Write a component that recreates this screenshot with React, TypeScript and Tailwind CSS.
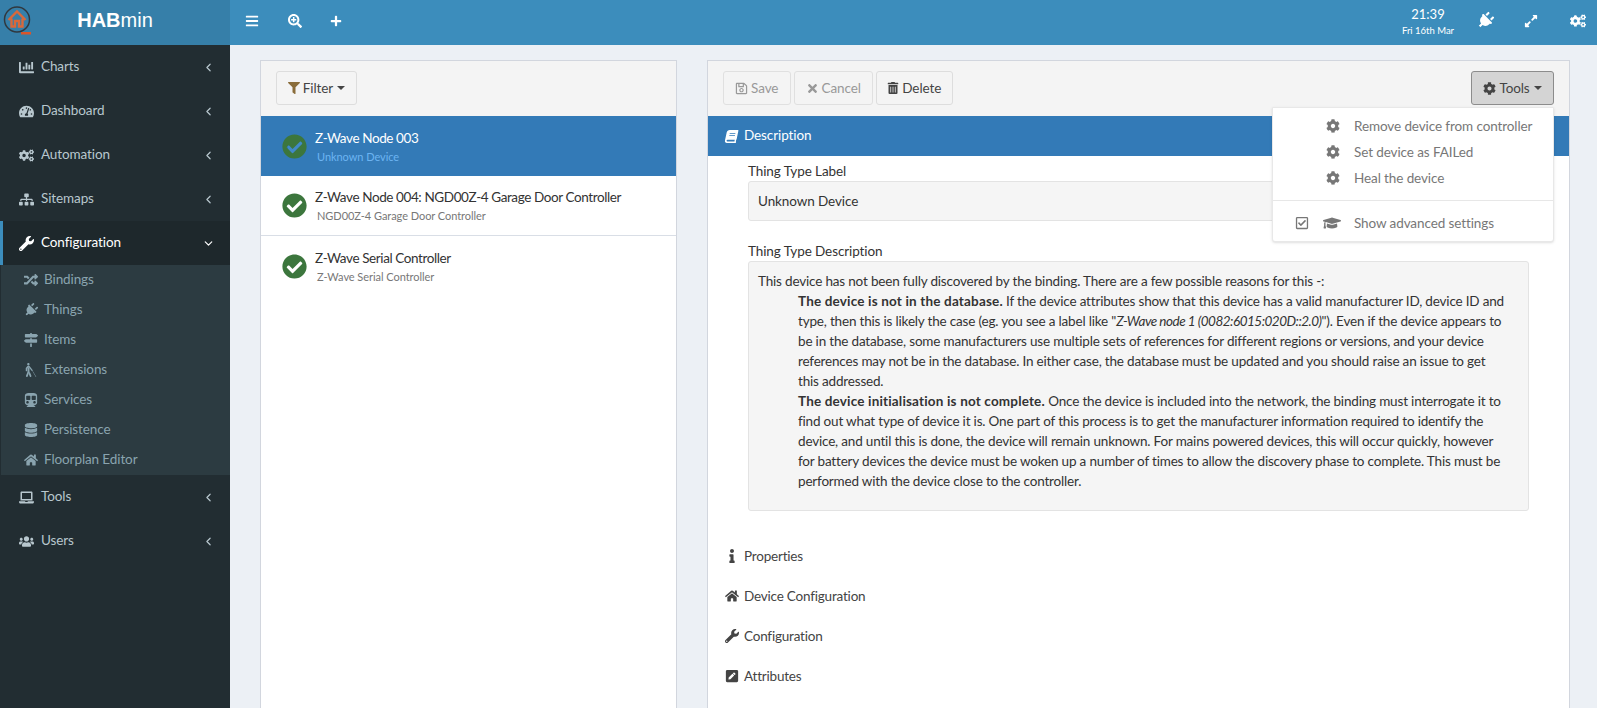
import { ReactNode } from "react";
import { ChevronDown, ChevronLeft } from "lucide-react";
import {
  FaBars,
  FaBlind,
  FaBook,
  FaChartBar,
  FaCheckCircle,
  FaCog,
  FaCogs,
  FaDatabase,
  FaExpandAlt,
  FaFilter,
  FaGraduationCap,
  FaHome,
  FaInfo,
  FaLaptop,
  FaMapSigns,
  FaPenSquare,
  FaPlug,
  FaPlus,
  FaRandom,
  FaRegCheckSquare,
  FaRegSave,
  FaSearchPlus,
  FaSitemap,
  FaSubway,
  FaTachometerAlt,
  FaTimes,
  FaTrashAlt,
  FaUsers,
  FaWrench,
} from "react-icons/fa";

function Caret() {
  return <span className="ml-[4px] h-0 w-0 border-x-[4px] border-t-[4px] border-x-transparent border-t-current" />;
}

function NavItem({ icon, label, active }: { icon: ReactNode; label: string; active?: boolean }) {
  return (
    <div
      className={
        active
          ? "flex h-[44px] items-center border-l-[3px] border-[#3c8dbc] bg-[#1e282c] pl-[13px] pr-[15px] text-white"
          : "flex h-[44px] items-center border-l-[3px] border-transparent pl-[13px] pr-[15px] text-[#b8c7ce]"
      }
    >
      <span className="mr-[5px] flex w-[20px] shrink-0 justify-center text-[15px]">{icon}</span>
      <span className="flex-1 pb-[1px] text-[13.5px]">{label}</span>
      {active ? <ChevronDown size={13} strokeWidth={2.2} /> : <ChevronLeft size={13} strokeWidth={2.2} />}
    </div>
  );
}

function SubItem({ icon, label }: { icon: ReactNode; label: string }) {
  return (
    <div className="flex h-[30px] items-center pl-[21px] text-[#8aa4af]">
      <span className="mr-[4px] flex w-[18px] shrink-0 justify-center text-[14px]">{icon}</span>
      <span className="pb-[1px] text-[13.5px]">{label}</span>
    </div>
  );
}

function ThingRow({ title, sub, selected, last }: { title: string; sub: string; selected?: boolean; last?: boolean }) {
  return (
    <div
      className={
        selected
          ? "flex h-[60px] items-center bg-[#337ab7] pl-[21px]"
          : last
            ? "flex h-[60px] items-center bg-white pl-[21px]"
            : "flex h-[60px] items-center border-b border-[#d9dee6] bg-white pl-[21px]"
      }
    >
      <span className="relative flex h-[25px] w-[25px] items-center justify-center">
        <span className={selected ? "absolute h-[14px] w-[14px] bg-[#4189c7]" : "absolute h-[14px] w-[14px] bg-white"} />
        <FaCheckCircle className="relative text-[25px] text-[#3c763d]" />
      </span>
      <div className="ml-[8px] flex flex-col pt-[1px]">
        <span className={selected ? "text-[13.5px] leading-[20px] tracking-[-0.4px] text-white" : "text-[13.5px] leading-[20px] tracking-[-0.4px] text-[#333]"}>
          {title}
        </span>
        <span
          className={
            selected
              ? "ml-[2px] text-[11px] leading-[18px] tracking-[-0.05px] text-[#6cb4f2]"
              : "ml-[2px] text-[11px] leading-[18px] tracking-[-0.05px] text-[#777]"
          }
        >
          {sub}
        </span>
      </div>
    </div>
  );
}

function ToolButton({ icon, label, w, dim }: { icon: ReactNode; label: string; w: string; dim?: boolean }) {
  return (
    <button
      className={
        dim
          ? `flex h-[34px] items-center justify-center gap-[3px] rounded-[3px] border border-[#e0e0e0] bg-[#f4f4f4] text-[13.5px] text-[#999] ${w}`
          : `flex h-[34px] items-center justify-center gap-[3px] rounded-[3px] border border-[#ddd] bg-[#f4f4f4] text-[13.5px] text-[#444] ${w}`
      }
    >
      {icon}
      {label}
    </button>
  );
}

function Section({ icon, label }: { icon: ReactNode; label: string }) {
  return (
    <div className="flex h-[40px] items-center pl-[14px] text-[13.5px] tracking-[-0.2px] text-[#444]">
      <span className="mr-[2px] flex w-[20px] justify-center text-[14px]">{icon}</span>
      {label}
    </div>
  );
}

function MenuRow({ label }: { label: string }) {
  return (
    <div className="flex h-[26px] items-center text-[13.5px] text-[#777]">
      <FaCog className="ml-[53px] w-[14px] text-[14px]" />
      <span className="ml-[14px]">{label}</span>
    </div>
  );
}

export default function App() {
  return (
    <div className="flex h-screen w-full flex-col overflow-hidden bg-[#ecf0f5] font-['Lato','Noto_Sans',sans-serif] tracking-[-0.1px]">
      {/* Header */}
      <header className="flex h-[45px] shrink-0 bg-[#3c8dbc] text-white">
        <div className="relative flex w-[230px] shrink-0 items-center justify-center bg-[#367fa9] pb-[5px]">
          <svg className="absolute left-[3px] top-[5px]" width="30" height="30" viewBox="0 0 30 30">
            <circle cx="14" cy="14.5" r="12.5" fill="none" stroke="#30383f" strokeWidth="1.5" />
            <path d="M5.5 15 14 6.5l8.5 8.5M8.5 13.5v8h3.5v-5.5h4v5.5h3.5v-8" fill="none" stroke="#d9683a" strokeWidth="2.4" />
            <rect x="18" y="27" width="10" height="2.5" fill="#d9552b" />
          </svg>
          <span className="font-['Liberation_Sans'] text-[20px] leading-none tracking-normal">
            <b>HAB</b>min
          </span>
        </div>
        <div className="flex flex-1 items-center pb-[4px]">
          <FaBars className="ml-[15px] text-[14px]" />
          <FaSearchPlus className="ml-[29px] text-[14px]" />
          <FaPlus className="ml-[28px] text-[12px]" />
        </div>
        <div className="flex items-start">
          <div className="mr-[4px] flex w-[60px] flex-col items-center pt-[4px]">
            <span className="text-[13px] leading-[20px] tracking-normal">21:39</span>
            <span className="text-[9.5px] leading-[14px] tracking-normal">Fri 16th Mar</span>
          </div>
          <span className="flex h-[41px] w-[46px] items-center justify-center">
            <FaPlug className="rotate-45 text-[17px]" />
          </span>
          <span className="flex h-[41px] w-[46px] items-center justify-center">
            <FaExpandAlt className="text-[14px]" />
          </span>
          <span className="flex h-[41px] w-[43px] items-center justify-center pl-[5px]">
            <FaCogs className="text-[16px]" />
          </span>
        </div>
      </header>

      <div className="flex min-h-0 flex-1">
        {/* Sidebar */}
        <aside className="w-[230px] shrink-0 bg-[#222d32]">
          <NavItem icon={<FaChartBar />} label="Charts" />
          <NavItem icon={<FaTachometerAlt />} label="Dashboard" />
          <NavItem icon={<FaCogs />} label="Automation" />
          <NavItem icon={<FaSitemap />} label="Sitemaps" />
          <NavItem icon={<FaWrench />} label="Configuration" active />
          <div className="ml-[1px] bg-[#2c3b41]">
            <SubItem icon={<FaRandom />} label="Bindings" />
            <SubItem icon={<FaPlug className="rotate-45" />} label="Things" />
            <SubItem icon={<FaMapSigns />} label="Items" />
            <SubItem icon={<FaBlind />} label="Extensions" />
            <SubItem icon={<FaSubway />} label="Services" />
            <SubItem icon={<FaDatabase />} label="Persistence" />
            <SubItem icon={<FaHome />} label="Floorplan Editor" />
          </div>
          <NavItem icon={<FaLaptop />} label="Tools" />
          <NavItem icon={<FaUsers />} label="Users" />
        </aside>

        {/* Content */}
        <main className="flex min-w-0 flex-1 gap-[30px] pl-[30px] pr-[27px] pt-[15px]">
          {/* Thing list */}
          <section className="w-[417px] shrink-0 border border-b-0 border-[#d2d6de] bg-white">
            <div className="flex h-[55px] items-start bg-[#f4f4f4] pl-[15px] pt-[10px]">
              <button className="flex h-[34px] w-[81px] items-center justify-center rounded-[3px] border border-[#ddd] bg-[#f4f4f4] text-[13.5px] text-[#444]">
                <FaFilter className="mr-[3px] text-[12px] text-[#8a6d3b]" />
                Filter
                <Caret />
              </button>
            </div>
            <ThingRow title="Z-Wave Node 003" sub="Unknown Device" selected />
            <ThingRow title="Z-Wave Node 004: NGD00Z-4 Garage Door Controller" sub="NGD00Z-4 Garage Door Controller" />
            <ThingRow title="Z-Wave Serial Controller" sub="Z-Wave Serial Controller" last />
          </section>

          {/* Thing detail */}
          <section className="relative min-w-0 flex-1 border border-b-0 border-[#d2d6de] bg-white">
            <div className="flex h-[55px] items-start gap-[3.5px] bg-[#f4f4f4] pl-[15px] pr-[15px] pt-[10px]">
              <ToolButton dim w="w-[67.5px]" icon={<FaRegSave className="text-[13px]" />} label="Save" />
              <ToolButton dim w="w-[78.5px]" icon={<FaTimes className="text-[13px]" />} label="Cancel" />
              <ToolButton w="w-[76.5px]" icon={<FaTrashAlt className="text-[12px]" />} label="Delete" />
              <button className="ml-auto flex h-[34px] w-[83px] items-center justify-center rounded-[3px] border border-[#8c8c8c] bg-[#d4d4d4] text-[13.5px] text-[#444]">
                <FaCog className="mr-[3px] text-[13px]" />
                Tools
                <Caret />
              </button>
            </div>

            <div className="flex h-[40px] items-center bg-[#337ab7] pl-[17px] text-[13.5px] text-white">
              <FaBook className="mr-[6px] -skew-x-12 text-[13px]" />
              <span className="pb-[1px]">Description</span>
            </div>

            <div className="pl-[40px] pr-[40px] pt-[5px] text-[13.5px] text-[#333]">
              <div className="leading-[20px]">Thing Type Label</div>
              <div className="flex h-[40px] items-center rounded-[3px] border border-[#e3e3e3] bg-[#f5f5f5] pl-[9px]">Unknown Device</div>
              <div className="mt-[20px] leading-[20px]">Thing Type Description</div>
              <div className="h-[250px] whitespace-nowrap rounded-[3px] border border-[#e3e3e3] bg-[#f5f5f5] px-[9px] pt-[9px] leading-[20px] tracking-[-0.18px]">
                This device has not been fully discovered by the binding. There are a few possible reasons for this -:
                <div className="pl-[40px]">
                  <b className="tracking-[0.17px]">The device is not in the database.</b> If the device attributes show that this device has a valid manufacturer ID, device ID and
                  <br />
                  type, then this is likely the case (eg. you see a label like "<i className="tracking-[-0.5px]">Z-Wave node 1 (0082:6015:020D::2.0)</i>"). Even if the device appears to
                  <br />
                  be in the database, some manufacturers use multiple sets of references for different regions or versions, and your device
                  <br />
                  references may not be in the database. In either case, the database must be updated and you should raise an issue to get
                  <br />
                  this addressed.
                  <br />
                  <b className="tracking-[0.17px]">The device initialisation is not complete.</b> Once the device is included into the network, the binding must interrogate it to
                  <br />
                  find out what type of device it is. One part of this process is to get the manufacturer information required to identify the
                  <br />
                  device, and until this is done, the device will remain unknown. For mains powered devices, this will occur quickly, however
                  <br />
                  for battery devices the device must be woken up a number of times to allow the discovery phase to complete. This must be
                  <br />
                  performed with the device close to the controller.
                </div>
              </div>
            </div>

            <div className="mt-[25px]">
              <Section icon={<FaInfo />} label="Properties" />
              <Section icon={<FaHome />} label="Device Configuration" />
              <Section icon={<FaWrench />} label="Configuration" />
              <Section icon={<FaPenSquare />} label="Attributes" />
            </div>

            {/* Tools menu */}
            <div className="absolute left-[564px] top-[46px] w-[282px] rounded-b-[3px] border border-[#e8e8e8] bg-white pt-[5px] shadow-sm">
              <MenuRow label="Remove device from controller" />
              <MenuRow label="Set device as FAILed" />
              <MenuRow label="Heal the device" />
              <div className="mt-[9px] border-t border-[#e7e7e7]" />
              <div className="flex h-[40px] items-center pt-[4px] text-[13.5px] text-[#777]">
                <FaRegCheckSquare className="ml-[22px] text-[14px]" />
                <FaGraduationCap className="ml-[14px] text-[18px]" />
                <span className="ml-[13px]">Show advanced settings</span>
              </div>
            </div>
          </section>
        </main>
      </div>
    </div>
  );
}
